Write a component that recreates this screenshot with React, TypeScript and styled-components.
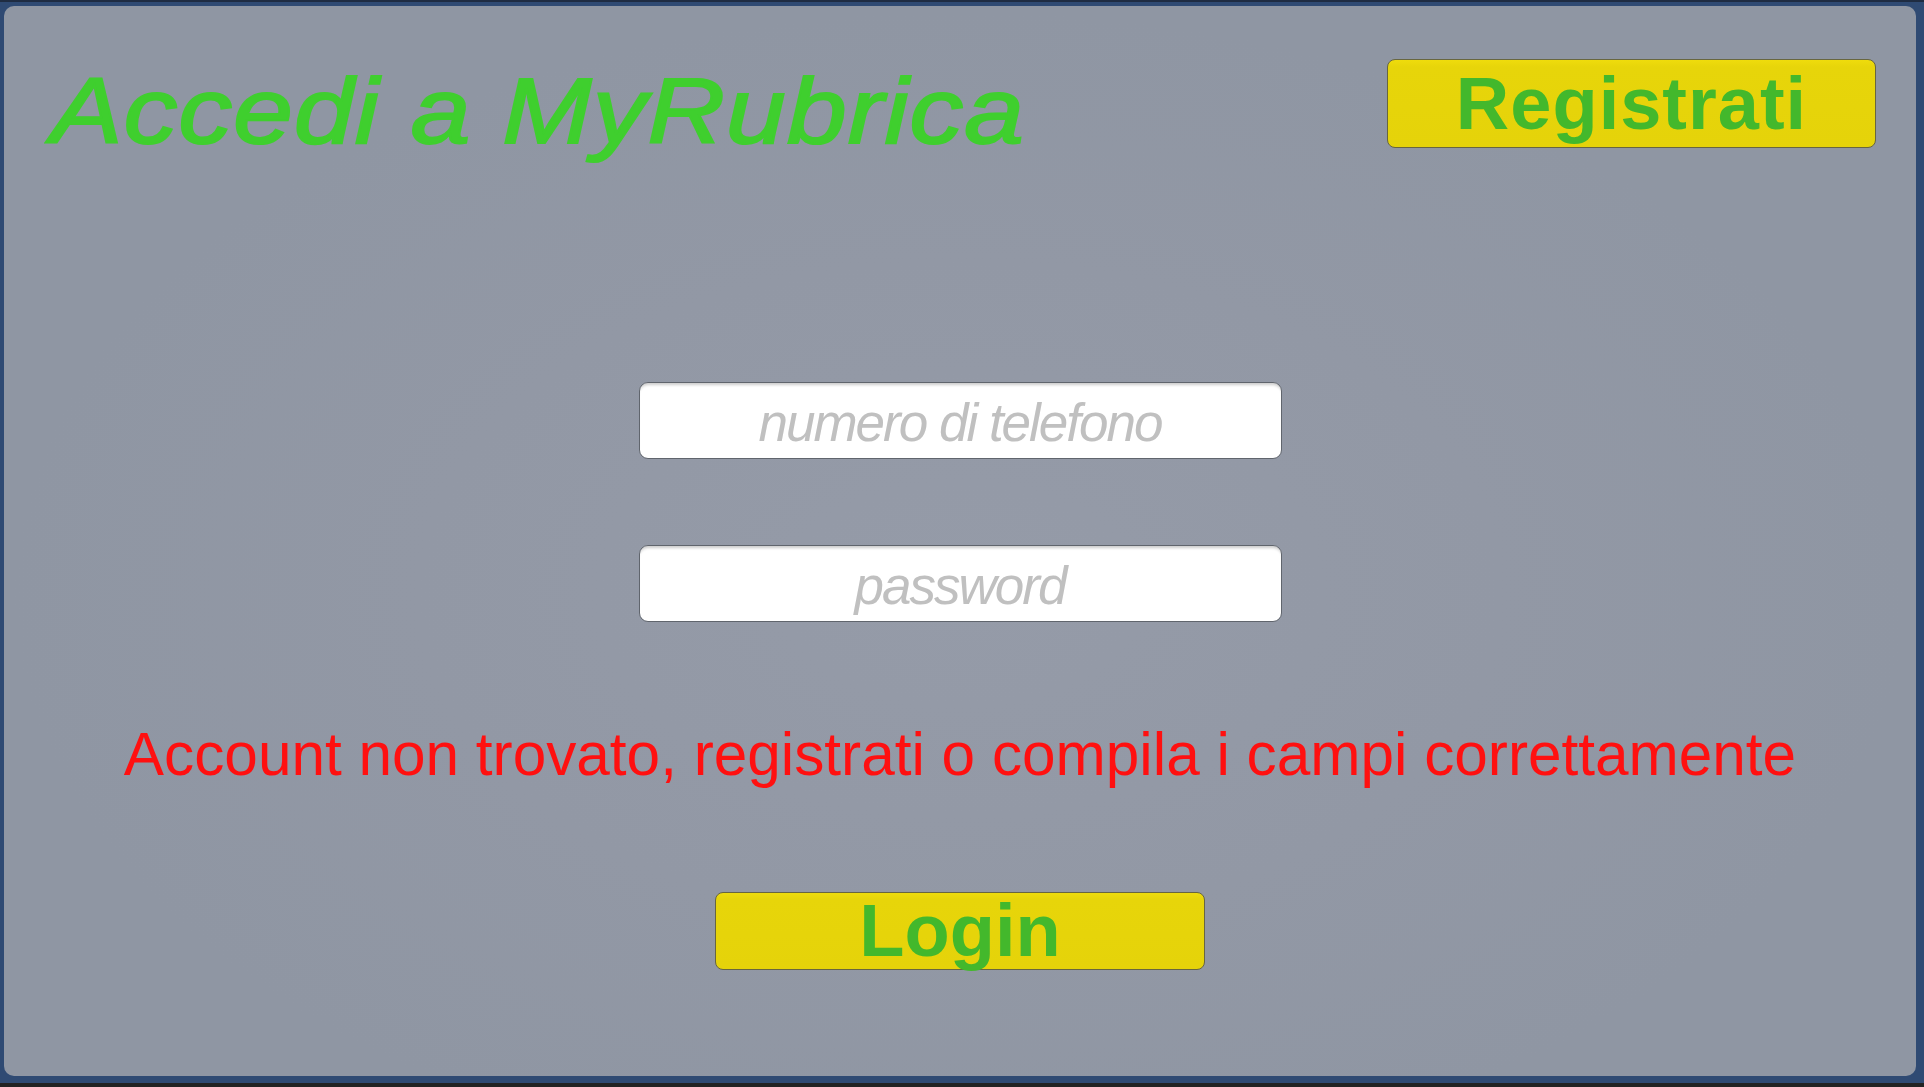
import { useState } from 'react'
import styled, { createGlobalStyle } from 'styled-components'

const GlobalStyle = createGlobalStyle`
   html, body {
      margin: 0;
      padding: 0;
      height: 100%;
   }

   body {
      background: #2f4a73;
      font-family: "Liberation Sans", Arial, sans-serif;
      overflow: hidden;
   }

   #root {
      height: 100%;
   }
`

const Window = styled.div`
   box-sizing: border-box;
   height: 100vh;
   padding: 4px 8px 7px 4px;
   border-top: 2px solid #1f2c42;
   border-bottom: 4px solid #222222;
   display: flex;
`

const Panel = styled.div`
   flex: 1;
   display: flex;
   flex-direction: column;
   padding: 53px 40px 0 47px;
   border-radius: 10px;
   background: radial-gradient(ellipse at 50% 55%, #959ba8 0%, #9298a5 40%, #8f96a3 70%);
`

const Header = styled.div`
   display: flex;
   justify-content: space-between;
   align-items: flex-start;
`

const Title = styled.h1`
   margin: 8px 0 0 0;
   font-family: "Liberation Sans", Arial, sans-serif;
   font-style: italic;
   font-weight: normal;
   font-size: 92px;
   line-height: 88px;
   letter-spacing: 1px;
   color: #3fcf2e;
   -webkit-text-stroke: 2px #3fcf2e;
   white-space: nowrap;
   transform: scaleX(1.165);
   transform-origin: left center;
`

const YellowButton = styled.button<{ $width: number; $height: number; $spacing: number }>`
   box-sizing: border-box;
   width: ${(p) => p.$width}px;
   height: ${(p) => p.$height}px;
   padding: 0;
   border: 1px solid #68663f;
   border-radius: 8px;
   background: linear-gradient(#efdc0c 0%, #e7d50a 8%, #e5d30a 100%);
   color: #43b82c;
   font-family: "Liberation Sans", Arial, sans-serif;
   font-weight: bold;
   font-size: 74px;
   letter-spacing: ${(p) => p.$spacing}px;
   line-height: ${(p) => p.$height - 2}px;
   text-align: center;
   cursor: pointer;
   overflow: visible;
`

const Form = styled.div`
   display: flex;
   flex-direction: column;
   align-items: center;
   margin-top: 227px;
   margin-right: 7px;
`

const Field = styled.input`
   box-sizing: border-box;
   width: 643px;
   height: 77px;
   margin-bottom: 86px;
   padding: 4px 10px 0 10px;
   border: 1px solid #60656d;
   border-radius: 9px;
   background: #ffffff;
   box-shadow: inset 0 4px 3px -2px rgba(0, 0, 0, 0.2);
   font-family: "Liberation Sans", Arial, sans-serif;
   font-style: italic;
   font-size: 53px;
   letter-spacing: -2px;
   color: #555555;
   text-align: center;
   outline: none;

   &::placeholder {
      color: #c0c0c0;
      opacity: 1;
   }

   &:last-of-type {
      margin-bottom: 0;
   }
`

const ErrorText = styled.p`
   margin: 97px 0 103px 0;
   font-family: "Liberation Sans", Arial, sans-serif;
   font-size: 60.3px;
   line-height: 70px;
   color: #ff1010;
   white-space: nowrap;
`

export default function App() {
   const [telefono, setTelefono] = useState('')
   const [password, setPassword] = useState('')

   return (
      <>
         <GlobalStyle />
         <Window>
            <Panel>
               <Header>
                  <Title>Accedi a MyRubrica</Title>
                  <YellowButton type="button" $width={489} $height={89} $spacing={1}>
                     Registrati
                  </YellowButton>
               </Header>

               <Form>
                  <Field
                     type="text"
                     placeholder="numero di telefono"
                     value={telefono}
                     onChange={(e) => setTelefono(e.target.value)}
                  />
                  <Field
                     type="password"
                     placeholder="password"
                     value={password}
                     onChange={(e) => setPassword(e.target.value)}
                  />
                  <ErrorText>Account non trovato, registrati o compila i campi correttamente</ErrorText>
                  <YellowButton type="button" $width={490} $height={78} $spacing={0}>
                     Login
                  </YellowButton>
               </Form>
            </Panel>
         </Window>
      </>
   )
}
